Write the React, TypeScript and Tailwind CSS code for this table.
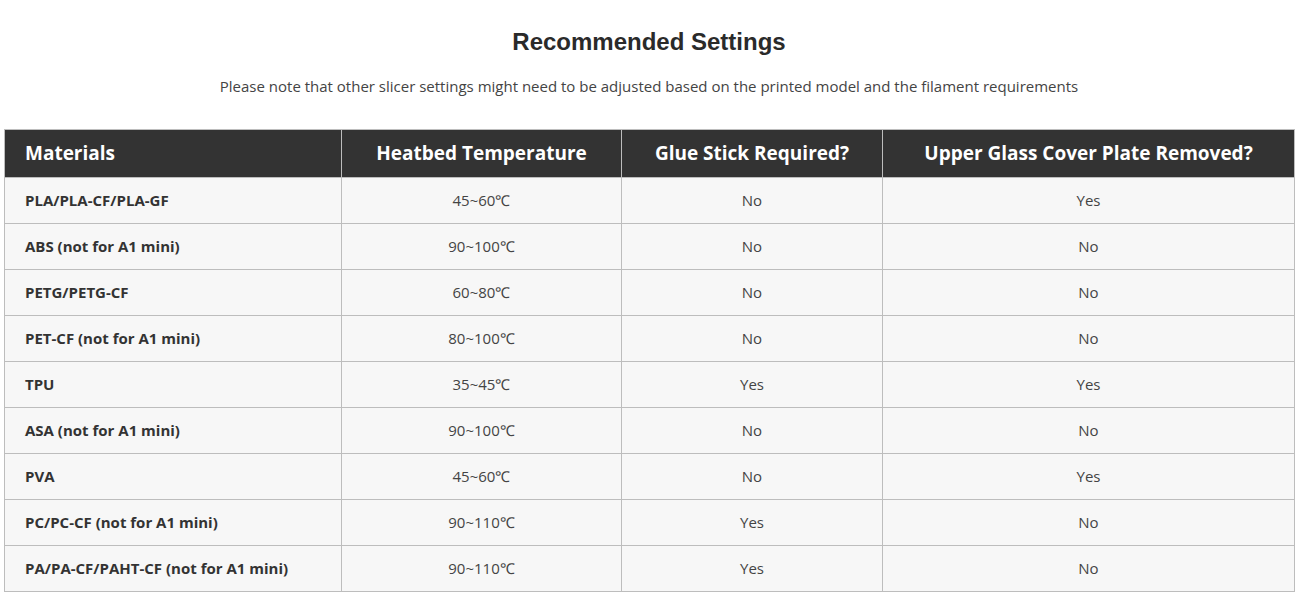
import React from "react";

const rows: [string, string, string, string][] = [
  ["PLA/PLA-CF/PLA-GF", "45~60℃", "No", "Yes"],
  ["ABS (not for A1 mini)", "90~100℃", "No", "No"],
  ["PETG/PETG-CF", "60~80℃", "No", "No"],
  ["PET-CF (not for A1 mini)", "80~100℃", "No", "No"],
  ["TPU", "35~45℃", "Yes", "Yes"],
  ["ASA (not for A1 mini)", "90~100℃", "No", "No"],
  ["PVA", "45~60℃", "No", "Yes"],
  ["PC/PC-CF (not for A1 mini)", "90~110℃", "Yes", "No"],
  ["PA/PA-CF/PAHT-CF (not for A1 mini)", "90~110℃", "Yes", "No"],
];

export default function App() {
  return (
    <div className="w-[1312px] h-[604px] bg-white overflow-hidden" style={{ fontFamily: "'Open Sans', sans-serif" }}>
      <div className="w-[1298px] pt-[27px] flex flex-col items-center">
        <h2 className="text-[24px] leading-[30px] font-bold text-[#2a2a2a]" style={{ fontFamily: "'Liberation Sans', Arial, sans-serif" }}>
          Recommended Settings
        </h2>
        <p className="mt-[19px] text-[15px] leading-[20px] text-[#444]">
          Please note that other slicer settings might need to be adjusted based on the printed model and the filament requirements
        </p>
      </div>
      <div className="pl-[4px] mt-[33px]">
        <table className="w-[1290px] border-collapse table-fixed border border-[#bdbdbd]">
          <colgroup>
            <col className="w-[337px]" />
            <col className="w-[280px]" />
            <col className="w-[261px]" />
            <col className="w-[412px]" />
          </colgroup>
          <thead>
            <tr className="bg-[#333333] h-[48px]">
              <th className="text-left pl-[20px] text-white font-bold text-[19px] border border-[#bdbdbd]">Materials</th>
              <th className="text-center text-white font-bold text-[19px] border border-[#bdbdbd]">Heatbed Temperature</th>
              <th className="text-center text-white font-bold text-[19px] border border-[#bdbdbd]">Glue Stick Required?</th>
              <th className="text-center text-white font-bold text-[19px] border border-[#bdbdbd]">Upper Glass Cover Plate Removed?</th>
            </tr>
          </thead>
          <tbody>
            {rows.map((r) => (
              <tr key={r[0]} className="bg-[#f7f7f7] h-[46px]">
                <td className="pl-[20px] text-[15px] font-bold text-[#333] border border-[#bdbdbd]">{r[0]}</td>
                <td className="text-center text-[15px] text-[#444] border border-[#bdbdbd]">{r[1]}</td>
                <td className="text-center text-[15px] text-[#444] border border-[#bdbdbd]">{r[2]}</td>
                <td className="text-center text-[15px] text-[#444] border border-[#bdbdbd]">{r[3]}</td>
              </tr>
            ))}
          </tbody>
        </table>
      </div>
    </div>
  );
}
